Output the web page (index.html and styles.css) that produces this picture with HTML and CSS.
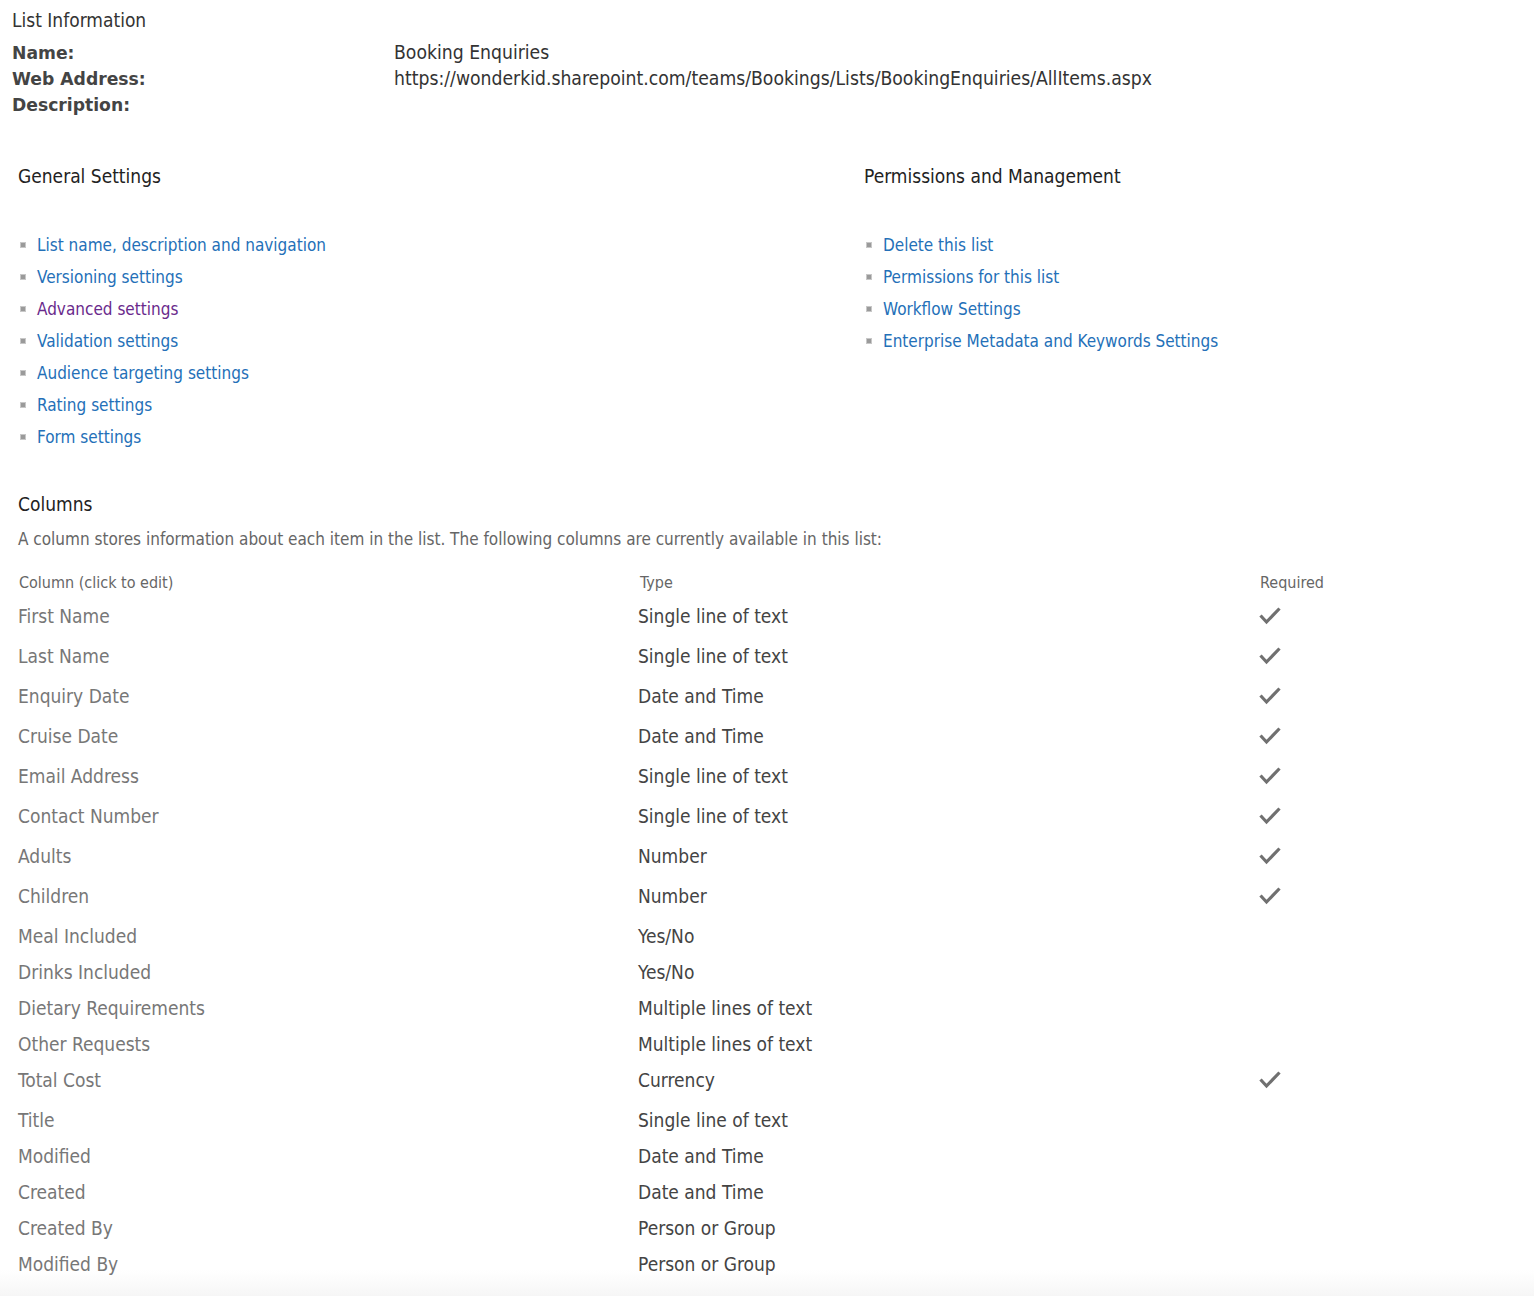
FILE: index.html
```html
<!DOCTYPE html>
<html>
<head>
<meta charset="utf-8">
<link rel="stylesheet" href="styles.css">
</head>
<body>
<div class="page">
  <section class="info">
    <h1 class="info-title">List Information</h1>
    <div class="info-grid">
      <div class="info-label">Name:</div><div class="info-value">Booking Enquiries</div>
      <div class="info-label">Web Address:</div><div class="info-value">https://wonderkid.sharepoint.com/teams/Bookings/Lists/BookingEnquiries/AllItems.aspx</div>
      <div class="info-label">Description:</div><div class="info-value"></div>
    </div>
  </section>

  <section class="settings">
    <div class="settings-col">
      <h2 class="sec-title">General Settings</h2>
      <ul class="links">
        <li><a href="#">List name, description and navigation</a></li>
        <li><a href="#">Versioning settings</a></li>
        <li><a href="#" class="visited">Advanced settings</a></li>
        <li><a href="#">Validation settings</a></li>
        <li><a href="#">Audience targeting settings</a></li>
        <li><a href="#">Rating settings</a></li>
        <li><a href="#">Form settings</a></li>
      </ul>
    </div>
    <div class="settings-col">
      <h2 class="sec-title">Permissions and Management</h2>
      <ul class="links">
        <li><a href="#">Delete this list</a></li>
        <li><a href="#">Permissions for this list</a></li>
        <li><a href="#">Workflow Settings</a></li>
        <li><a href="#">Enterprise Metadata and Keywords Settings</a></li>
      </ul>
    </div>
  </section>

  <section class="columns">
    <h2 class="sec-title">Columns</h2>
    <p class="columns-desc">A column stores information about each item in the list. The following columns are currently available in this list:</p>
    <div class="col-table">
      <div class="col-head">
        <div>Column (click to edit)</div><div>Type</div><div>Required</div>
      </div>
      <div class="col-row req"><div class="c-name">First Name</div><div class="c-type">Single line of text</div><div class="c-req"><svg class="check" viewBox="0 0 24 20"><path d="M2.5 9.5 L8.5 16 L21.5 2.5"/></svg></div></div>
      <div class="col-row req"><div class="c-name">Last Name</div><div class="c-type">Single line of text</div><div class="c-req"><svg class="check" viewBox="0 0 24 20"><path d="M2.5 9.5 L8.5 16 L21.5 2.5"/></svg></div></div>
      <div class="col-row req"><div class="c-name">Enquiry Date</div><div class="c-type">Date and Time</div><div class="c-req"><svg class="check" viewBox="0 0 24 20"><path d="M2.5 9.5 L8.5 16 L21.5 2.5"/></svg></div></div>
      <div class="col-row req"><div class="c-name">Cruise Date</div><div class="c-type">Date and Time</div><div class="c-req"><svg class="check" viewBox="0 0 24 20"><path d="M2.5 9.5 L8.5 16 L21.5 2.5"/></svg></div></div>
      <div class="col-row req"><div class="c-name">Email Address</div><div class="c-type">Single line of text</div><div class="c-req"><svg class="check" viewBox="0 0 24 20"><path d="M2.5 9.5 L8.5 16 L21.5 2.5"/></svg></div></div>
      <div class="col-row req"><div class="c-name">Contact Number</div><div class="c-type">Single line of text</div><div class="c-req"><svg class="check" viewBox="0 0 24 20"><path d="M2.5 9.5 L8.5 16 L21.5 2.5"/></svg></div></div>
      <div class="col-row req"><div class="c-name">Adults</div><div class="c-type">Number</div><div class="c-req"><svg class="check" viewBox="0 0 24 20"><path d="M2.5 9.5 L8.5 16 L21.5 2.5"/></svg></div></div>
      <div class="col-row req"><div class="c-name">Children</div><div class="c-type">Number</div><div class="c-req"><svg class="check" viewBox="0 0 24 20"><path d="M2.5 9.5 L8.5 16 L21.5 2.5"/></svg></div></div>
      <div class="col-row"><div class="c-name">Meal Included</div><div class="c-type">Yes/No</div><div class="c-req"></div></div>
      <div class="col-row"><div class="c-name">Drinks Included</div><div class="c-type">Yes/No</div><div class="c-req"></div></div>
      <div class="col-row"><div class="c-name">Dietary Requirements</div><div class="c-type">Multiple lines of text</div><div class="c-req"></div></div>
      <div class="col-row"><div class="c-name">Other Requests</div><div class="c-type">Multiple lines of text</div><div class="c-req"></div></div>
      <div class="col-row req"><div class="c-name">Total Cost</div><div class="c-type">Currency</div><div class="c-req"><svg class="check" viewBox="0 0 24 20"><path d="M2.5 9.5 L8.5 16 L21.5 2.5"/></svg></div></div>
      <div class="col-row"><div class="c-name">Title</div><div class="c-type">Single line of text</div><div class="c-req"></div></div>
      <div class="col-row"><div class="c-name">Modified</div><div class="c-type">Date and Time</div><div class="c-req"></div></div>
      <div class="col-row"><div class="c-name">Created</div><div class="c-type">Date and Time</div><div class="c-req"></div></div>
      <div class="col-row"><div class="c-name">Created By</div><div class="c-type">Person or Group</div><div class="c-req"></div></div>
      <div class="col-row"><div class="c-name">Modified By</div><div class="c-type">Person or Group</div><div class="c-req"></div></div>
    </div>
  </section>
</div>
</body>
</html>
```
FILE: styles.css
```css
html, body {
  margin: 0;
  padding: 0;
}
body {
  font-family: "DejaVu Sans Condensed", "DejaVu Sans", sans-serif;
  color: #444;
  background: linear-gradient(to bottom, #fff 0, #fff 1270px, #f6f6f6 1296px);
  min-height: 1296px;
}
.page {
  padding: 8px 0 0 0;
}
.info {
  padding-left: 12px;
}
.info-title {
  margin: 0;
  font-size: 19px;
  font-weight: normal;
  color: #333;
  line-height: 24px;
}
.info-grid {
  display: grid;
  grid-template-columns: 382px 1fr;
  margin-top: 8px;
  line-height: 26px;
}
.info-label {
  font-family: "DejaVu Sans", sans-serif;
  font-weight: bold;
  font-size: 17.2px;
  color: #444;
}
.info-value {
  font-size: 19.2px;
  color: #333;
  line-height: 25px;
}
.settings {
  display: grid;
  grid-template-columns: 846px 1fr;
  padding-left: 18px;
  margin-top: 46px;
}
.sec-title {
  margin: 0;
  font-size: 19px;
  font-weight: normal;
  color: #222;
  line-height: 24px;
}
.links {
  list-style: none;
  margin: 41px 0 0 0;
  padding: 0;
}
.links li {
  display: flex;
  align-items: center;
  height: 32px;
}
.links li::before {
  content: "";
  width: 4px;
  height: 4px;
  background: #9a9a9a;
  border: 1px solid #c8c8c8;
  margin: 0 11px 0 2px;
  flex: none;
}
.links a {
  color: #2470b8;
  text-decoration: none;
  font-size: 17px;
}
.links a.visited {
  color: #6a2a8c;
}
.columns {
  padding-left: 18px;
  margin-top: 39px;
}
.columns-desc {
  margin: 13px 0 0 0;
  font-size: 17px;
  color: #666;
  line-height: 20px;
}
.col-table {
  margin-top: 21px;
}
.col-head {
  display: grid;
  grid-template-columns: 620px 620px 1fr;
  font-size: 16px;
  color: #666;
  height: 26px;
  line-height: 26px;
  padding-left: 1px;
}
.col-head div:nth-child(2) { padding-left: 1px; }
.col-head div:nth-child(3) { padding-left: 1px; }
.col-row {
  display: grid;
  grid-template-columns: 620px 620px 1fr;
  align-items: center;
  box-sizing: border-box;
  height: 36px;
  padding-top: 4px;
  font-size: 19px;
}
.col-row.req {
  height: 40px;
  padding-top: 0;
}
.c-name {
  color: #777;
}
.c-type {
  color: #444;
}
.c-req {
  display: flex;
  align-items: center;
}
.check {
  width: 24px;
  height: 20px;
  fill: none;
  stroke: #707070;
  stroke-width: 3.2;
  stroke-linejoin: miter;
}
```
